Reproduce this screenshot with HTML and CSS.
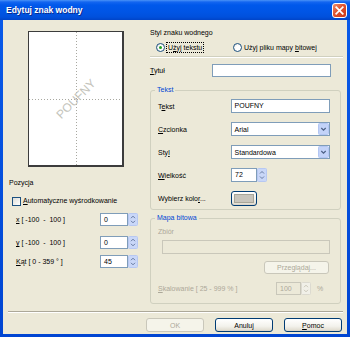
FILE: index.html
```html
<!DOCTYPE html>
<html lang="pl">
<head>
    <meta charset="UTF-8">
    <meta name="viewport" content="width=device-width, initial-scale=1.0">
    <title>Edytuj znak wodny</title>
    <link rel="stylesheet" href="styles.css">
</head>
<body>

<div class="window">
    <div class="titlebar">
        <span class="title">Edytuj znak wodny</span>
        <span class="close-button">
            <svg width="9" height="9" viewBox="0 0 9 9"><path d="M1.2 1.2L7.8 7.8M7.8 1.2L1.2 7.8" stroke="#fff" stroke-width="1.7" stroke-linecap="square"/></svg>
        </span>
    </div>

    <div class="client">
        <div class="main">
            <div class="left-column">
                <div class="preview">
                    <span class="preview-text">POUFNY</span>
                </div>

                <div class="section-label">Pozycja</div>
                <div class="check-row">
                    <span class="checkbox"></span>
                    <span><u>A</u>utomatyczne wyśrodkowanie</span>
                </div>

                <div class="pos-row pos-x">
                    <span class="pos-label"><u>x</u> [ -100 &nbsp;- &nbsp;100 ]</span>
                    <span class="spin-field">
                        <span class="field spin-input">0</span>
                        <svg class="spinner" width="10" height="13" viewBox="0 0 10 13"><rect x="0.5" y="0.5" width="9" height="12" rx="1" fill="#C9D7F8" stroke="#B7C8F2"/><path d="M3 5.2l2-2 2 2M3 7.8l2 2 2-2" fill="none" stroke="#5A6E95" stroke-width="0.9"/></svg>
                    </span>
                </div>
                <div class="pos-row pos-y">
                    <span class="pos-label"><u>y</u> [ -100 &nbsp;- &nbsp;100 ]</span>
                    <span class="spin-field">
                        <span class="field spin-input">0</span>
                        <svg class="spinner" width="10" height="13" viewBox="0 0 10 13"><rect x="0.5" y="0.5" width="9" height="12" rx="1" fill="#C9D7F8" stroke="#B7C8F2"/><path d="M3 5.2l2-2 2 2M3 7.8l2 2 2-2" fill="none" stroke="#5A6E95" stroke-width="0.9"/></svg>
                    </span>
                </div>
                <div class="pos-row pos-angle">
                    <span class="pos-label"><u>K</u>ąt [ 0 - 359 ° ]</span>
                    <span class="spin-field">
                        <span class="field spin-input">45</span>
                        <svg class="spinner" width="10" height="13" viewBox="0 0 10 13"><rect x="0.5" y="0.5" width="9" height="12" rx="1" fill="#C9D7F8" stroke="#B7C8F2"/><path d="M3 5.2l2-2 2 2M3 7.8l2 2 2-2" fill="none" stroke="#5A6E95" stroke-width="0.9"/></svg>
                    </span>
                </div>
            </div>

            <div class="right-column">
                <div class="heading">Styl znaku wodnego</div>
                <div class="radio-row">
                    <span class="radio-item radio-first">
                        <span class="radio checked"></span>
                        <span class="focus-text">U<u>ż</u>yj tekstu</span>
                    </span>
                    <span class="radio-item">
                        <span class="radio"></span>
                        <span>Użyj pliku mapy <u>b</u>itowej</span>
                    </span>
                </div>
                <div class="etched"></div>

                <div class="title-row">
                    <span class="title-label"><u>T</u>ytuł</span>
                    <span class="field title-field"></span>
                </div>

                <fieldset class="group text-group">
                    <legend>Tekst</legend>
                    <div class="form-row">
                        <span class="row-label">T<u>e</u>kst</span>
                        <span class="field wide-field">POUFNY</span>
                    </div>
                    <div class="form-row">
                        <span class="row-label"><u>C</u>zcionka</span>
                        <span class="combo">
                            <span class="combo-value">Arial</span>
                            <svg class="drop" width="11" height="12" viewBox="0 0 11 12"><rect x="0.5" y="0.5" width="10" height="11" rx="1" fill="#C3D3F8" stroke="#B3C6F3"/><path d="M3.3 5l2.2 2.2L7.7 5" fill="none" stroke="#4D6185" stroke-width="1.2"/></svg>
                        </span>
                    </div>
                    <div class="form-row">
                        <span class="row-label">Sty<u>l</u></span>
                        <span class="combo">
                            <span class="combo-value">Standardowa</span>
                            <svg class="drop" width="11" height="12" viewBox="0 0 11 12"><rect x="0.5" y="0.5" width="10" height="11" rx="1" fill="#C3D3F8" stroke="#B3C6F3"/><path d="M3.3 5l2.2 2.2L7.7 5" fill="none" stroke="#4D6185" stroke-width="1.2"/></svg>
                        </span>
                    </div>
                    <div class="form-row">
                        <span class="row-label"><u>W</u>ielkość</span>
                        <span class="spin-field">
                            <span class="field size-input">72</span>
                            <svg class="spinner" width="10" height="14" viewBox="0 0 10 14"><rect x="0.5" y="0.5" width="9" height="13" rx="1" fill="#C9D7F8" stroke="#B7C8F2"/><path d="M3 5.5l2-2 2 2M3 8.5l2 2 2-2" fill="none" stroke="#5A6E95" stroke-width="0.9"/></svg>
                        </span>
                    </div>
                    <div class="form-row">
                        <span class="row-label">Wybierz kolo<u>r</u>...</span>
                        <span class="button color-button"><span class="swatch"></span></span>
                    </div>
                </fieldset>

                <fieldset class="group bitmap-group">
                    <legend>Mapa bitowa</legend>
                    <div class="file-label">Zbiór</div>
                    <div class="field path-field"></div>
                    <div class="browse-row">
                        <span class="button disabled browse-button">Przeglądaj...</span>
                    </div>
                    <div class="form-row scale-row">
                        <span class="scale-label"><u>S</u>kalowanie [ 25 - 999 % ]</span>
                        <span class="spin-field">
                            <span class="field scale-input">100</span>
                            <svg class="spinner" width="10" height="13" viewBox="0 0 10 13"><rect x="0.5" y="0.5" width="9" height="12" rx="1" fill="#F1F0E8" stroke="#DCDAD0"/><path d="M3 5.2l2-2 2 2M3 7.8l2 2 2-2" fill="none" stroke="#C5C2B2" stroke-width="0.9"/></svg>
                        </span>
                        <span class="percent">%</span>
                    </div>
                </fieldset>
            </div>
        </div>

        <div class="separator"></div>

        <div class="button-row">
            <span class="button disabled">OK</span>
            <span class="button">Anuluj</span>
            <span class="button"><u>P</u>omoc</span>
        </div>
    </div>
</div>

</body>
</html>
```

FILE: styles.css
```css
body {
    margin: 0;
    font-family: "Liberation Sans", Arial, sans-serif;
    font-size: 7px;
    color: #000;
    background-color: #ECE9D8;
}
.window {
    width: 350px;
    height: 337px;
    display: flex;
    flex-direction: column;
    background: linear-gradient(to bottom, #0A5BEA, #0045D2);
}
.titlebar {
    height: 20px;
    flex-shrink: 0;
    display: flex;
    align-items: center;
    justify-content: space-between;
    padding: 0 3px 0 6px;
    background: linear-gradient(to bottom, #4A93F7 0, #1466F0 2px, #0058EB 5px, #0055E5 60%, #0050DC 85%, #0044C8 100%);
}
.title {
    color: #fff;
    font-weight: bold;
    font-size: 8.5px;
    text-shadow: 1px 1px 0 #0A2D8F;
}
.close-button {
    width: 15px;
    height: 15px;
    box-sizing: border-box;
    display: flex;
    align-items: center;
    justify-content: center;
    border: 1px solid #fff;
    border-radius: 3px;
    background: linear-gradient(to bottom right, #EE8E6E, #E0532F 45%, #C9391A);
}
.client {
    flex: 1;
    margin: 0 3px 3px 3px;
    padding: 0 4px 0 5px;
    background-color: #ECE9D8;
}
.main {
    display: flex;
}
.left-column {
    width: 142px;
    display: flex;
    flex-direction: column;
}
.right-column {
    width: 193px;
    display: flex;
    flex-direction: column;
}

/* preview page */
.preview {
    width: 96px;
    height: 136px;
    box-sizing: border-box;
    margin: 11px 0 0 20px;
    border: 1px solid #3C3C3C;
    border-right-width: 2px;
    border-bottom-width: 2px;
    display: flex;
    align-items: center;
    justify-content: center;
    background:
        repeating-linear-gradient(to bottom, #A8A8A0 0 1px, transparent 1px 3px) 47px 0 / 1px 100% no-repeat,
        repeating-linear-gradient(to right, #A8A8A0 0 1px, transparent 1px 3px) 0 67px / 100% 1px no-repeat,
        #fff;
}
.preview-text {
    color: #C4C4BC;
    font-size: 12px;
    transform: rotate(-45deg);
    margin: 1px 0 0 1px;
}

.section-label {
    height: 10px;
    line-height: 10px;
    margin: 11px 0 0 1px;
}
.check-row {
    height: 10px;
    line-height: 10px;
    margin: 8px 0 0 4px;
    display: flex;
    align-items: center;
    gap: 2px;
}
.checkbox {
    width: 9px;
    height: 9px;
    box-sizing: border-box;
    border: 1px solid #1C5180;
    background: linear-gradient(to bottom right, #DCDCD7, #fff);
}
.pos-row {
    height: 13px;
    display: flex;
    align-items: center;
    padding-left: 8px;
}
.pos-x {
    margin-top: 7px;
}
.pos-y {
    margin-top: 10px;
}
.pos-angle {
    margin-top: 6px;
}
.pos-label {
    width: 84px;
}
.spin-field {
    display: flex;
}
.field {
    box-sizing: border-box;
    border: 1px solid #7F9DB9;
    background-color: #fff;
    padding-left: 3px;
    white-space: nowrap;
}
.spin-input {
    width: 28px;
    height: 13px;
    line-height: 11px;
}
.spinner {
    display: block;
}

/* right side */
.heading {
    height: 10px;
    line-height: 10px;
    margin-top: 8px;
}
.radio-row {
    height: 10px;
    margin: 4px 0 0 6px;
    display: flex;
    align-items: center;
}
.radio-item {
    display: flex;
    align-items: center;
    gap: 2px;
}
.radio-first {
    width: 77px;
}
.radio {
    width: 9px;
    height: 9px;
    box-sizing: border-box;
    border: 1px solid #1C5180;
    border-radius: 50%;
    background: radial-gradient(circle at 60% 60%, #fff 40%, #DCDCD7);
    display: flex;
    align-items: center;
    justify-content: center;
}
.radio.checked::after {
    content: "";
    width: 3px;
    height: 3px;
    border-radius: 50%;
    background-color: #21A121;
}
.focus-text {
    outline: 1px dotted #000;
    padding: 0 1px;
    line-height: 9px;
}
.etched {
    margin-top: 4px;
    border-top: 1px solid #D0D0BF;
    border-bottom: 1px solid #fff;
}
.title-row {
    margin-top: 6px;
    height: 13px;
    display: flex;
    align-items: center;
}
.title-label {
    width: 62px;
}
.title-field {
    width: 119px;
    height: 13px;
}

.group {
    margin: 0;
    padding: 0 10px 0 7px;
    min-width: 0;
    border: 1px solid #D0D0BF;
    border-radius: 3px;
    width: 191px;
    box-sizing: border-box;
}
.group legend {
    padding: 0 2px;
    margin-left: -3px;
    line-height: 10px;
    color: #0046D5;
}
.text-group {
    margin-top: 8px;
    padding-top: 4px;
    padding-bottom: 4px;
    display: flex;
    flex-direction: column;
    gap: 9px;
}
.form-row {
    height: 14px;
    display: flex;
    align-items: center;
}
.row-label {
    width: 73px;
}
.wide-field {
    width: 100px;
    height: 14px;
    line-height: 12px;
}
.combo {
    width: 100px;
    height: 14px;
    box-sizing: border-box;
    border: 1px solid #7F9DB9;
    background-color: #fff;
    display: flex;
    align-items: center;
    justify-content: space-between;
    padding: 0 0 0 3px;
}
.drop {
    display: block;
}
.size-input {
    width: 26px;
    height: 14px;
    line-height: 12px;
}
.button {
    box-sizing: border-box;
    height: 14px;
    border: 1px solid #003C74;
    border-radius: 3px;
    background: linear-gradient(to bottom, #fff, #F3F2EC 60%, #E3DFD3 90%, #D6D0C5);
    display: flex;
    align-items: center;
    justify-content: center;
}
.button.disabled {
    border-color: #C9C7BA;
    background: #F5F4EA;
    color: #ACA899;
}
.color-button {
    width: 26px;
    height: 15px;
}
.swatch {
    width: 18px;
    height: 7px;
    border: 1px solid #A8A699;
    background-color: #C8C5BC;
}

.bitmap-group {
    margin-top: 3px;
    padding-bottom: 8px;
    color: #ACA899;
}
.file-label {
    height: 10px;
    line-height: 10px;
    margin-top: 4px;
}
.path-field {
    margin: 3px 0 0 4px;
    width: 168px;
    height: 14px;
    border-color: #C9C7BA;
    background-color: #ECE9D8;
}
.browse-row {
    margin-top: 7px;
    display: flex;
    justify-content: flex-end;
    padding-right: 1px;
}
.browse-button {
    width: 65px;
    height: 13px;
}
.scale-row {
    margin-top: 8px;
    height: 13px;
}
.scale-label {
    width: 118px;
}
.scale-input {
    width: 25px;
    height: 13px;
    line-height: 11px;
    border-color: #C9C7BA;
    background-color: #ECE9D8;
}
.percent {
    margin-left: 6px;
}

/* bottom */
.separator {
    margin-top: 7px;
    border-top: 1px solid #ACA899;
    border-bottom: 1px solid #fff;
}
.button-row {
    margin-top: 5px;
    display: flex;
    justify-content: flex-end;
    gap: 11px;
    padding-right: 1px;
}
.button-row .button {
    width: 58px;
}
```
